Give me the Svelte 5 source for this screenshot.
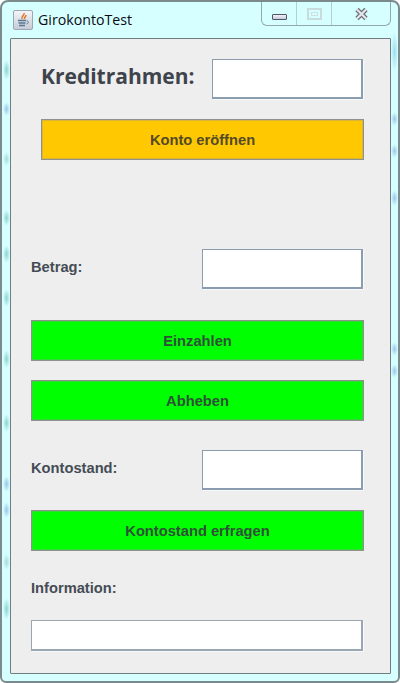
<script>
	let kredit = $state('');
	let betrag = $state('');
	let stand = $state('');
	let info = $state('');
</script>

<div class="window">
	<header class="titlebar">
		<span class="app-icon">
			<svg width="20" height="20" viewBox="0 0 20 20">
				<path d="M11 3c1 2-3 3-2 6M13 5c0 2-2 2-1.500 4" fill="none" stroke="#e2762c" stroke-width="1.500" />
				<path d="M5 10.500h8M5.500 13h7M6 15.500h6" stroke="#5a7590" stroke-width="1.300" />
				<path d="M13.500 11c2.500-.5 2.500 2.500 0 3" fill="none" stroke="#5a7590" stroke-width="1" />
			</svg>
		</span>
		<span class="title">GirokontoTest</span>
		<div class="controls">
			<span class="ctl min"><i></i></span>
			<span class="ctl max"><i></i></span>
			<span class="ctl close">
				<svg width="15" height="14" viewBox="0 0 15 14">
					<path d="M3 2.500l9 9M12 2.500l-9 9" stroke="#6c7178" stroke-width="4.600" />
					<path d="M3 2.500l9 9M12 2.500l-9 9" stroke="#e4e6ea" stroke-width="2.200" />
				</svg>
			</span>
		</div>
	</header>

	<main class="panel">
		<div class="row kredit">
			<label for="kredit">Kreditrahmen:</label>
			<input id="kredit" bind:value={kredit} />
		</div>
		<button class="orange open">Konto eröffnen</button>

		<div class="row betrag">
			<label for="betrag">Betrag:</label>
			<input id="betrag" bind:value={betrag} />
		</div>
		<button class="green einzahlen">Einzahlen</button>
		<button class="green abheben">Abheben</button>

		<div class="row stand">
			<label for="stand">Kontostand:</label>
			<input id="stand" bind:value={stand} />
		</div>
		<button class="green erfragen">Kontostand erfragen</button>

		<label class="info-label" for="info">Information:</label>
		<input class="info" id="info" bind:value={info} />
	</main>
</div>

<style>
	:global(body) {
		margin: 0;
		background: #fff;
	}

	.window {
		box-sizing: border-box;
		width: 400px;
		height: 683px;
		display: flex;
		flex-direction: column;
		padding: 0 7px 7px 8px;
		/* blotches of the desktop showing through the aero glass */
		background:
			radial-gradient(closest-side, #90d2d2, transparent) 1px 58px / 7px 20px no-repeat,
			radial-gradient(closest-side, #98c8ea, transparent) 1px 100px / 7px 14px no-repeat,
			radial-gradient(closest-side, #a4dcdc, transparent) 1px 150px / 7px 14px no-repeat,
			radial-gradient(closest-side, #90d2d2, transparent) 1px 208px / 7px 16px no-repeat,
			radial-gradient(closest-side, #90d2d2, transparent) 1px 243px / 7px 18px no-repeat,
			radial-gradient(closest-side, #90d2d2, transparent) 1px 287px / 7px 18px no-repeat,
			radial-gradient(closest-side, #90d2d2, transparent) 1px 348px / 7px 18px no-repeat,
			radial-gradient(closest-side, #90d2d2, transparent) 1px 412px / 7px 18px no-repeat,
			radial-gradient(closest-side, #98c8ea, transparent) 1px 474px / 7px 16px no-repeat,
			radial-gradient(closest-side, #98c8ea, transparent) 1px 500px / 7px 16px no-repeat,
			radial-gradient(closest-side, #a4dcdc, transparent) 1px 552px / 7px 16px no-repeat,
			radial-gradient(closest-side, #90d2d2, transparent) 1px 596px / 7px 22px no-repeat,
			radial-gradient(closest-side, #9cdcf0, transparent) 389px 30px / 7px 40px no-repeat,
			radial-gradient(closest-side, #98c8ea, transparent) 389px 110px / 7px 14px no-repeat,
			radial-gradient(closest-side, #98c8ea, transparent) 389px 142px / 7px 14px no-repeat,
			radial-gradient(closest-side, #98c8ea, transparent) 389px 188px / 7px 16px no-repeat,
			radial-gradient(closest-side, #98c8ea, transparent) 389px 340px / 7px 14px no-repeat,
			radial-gradient(closest-side, #98c8ea, transparent) 389px 362px / 7px 14px no-repeat,
			#d6ffff;
		border: 2px solid #7b8a8c;
		border-radius: 8px 8px 6px 6px;
		font-family: "Liberation Sans", Arial, sans-serif;
	}

	.titlebar {
		height: 36px;
		flex: none;
		display: flex;
		align-items: flex-start;
		position: relative;
	}

	.app-icon {
		box-sizing: border-box;
		width: 20px;
		height: 20px;
		margin: 8px 0 0 3px;
		display: flex;
		border: 1px solid #9aa7b4;
		border-radius: 2px;
		background: linear-gradient(#f4f5f7, #c6ccd6);
	}

	.app-icon svg {
		margin: -1px;
	}

	.title {
		margin: 9px 0 0 5px;
		font-family: "Open Sans", sans-serif;
		font-size: 14.200px;
		line-height: 18px;
		color: #0b0b14;
	}

	.controls {
		position: absolute;
		top: 0;
		right: 0;
		display: flex;
		height: 24px;
		box-sizing: border-box;
		border: 1px solid #93a8aa;
		border-top: none;
		border-radius: 0 0 6px 6px;
	}

	.ctl {
		display: flex;
		align-items: center;
		justify-content: center;
		box-sizing: border-box;
		height: 100%;
	}

	.min {
		width: 35px;
		border-right: 1px solid #b4cfcf;
	}

	.min i {
		display: block;
		box-sizing: border-box;
		width: 15px;
		height: 6px;
		margin-top: 6px;
		background: linear-gradient(#f1f2f6, #c9cbdb);
		border: 1px solid #50566a;
		border-radius: 1px;
	}

	.max {
		width: 35px;
		border-right: 1px solid #b4cfcf;
	}

	.max i {
		display: block;
		box-sizing: border-box;
		width: 15px;
		height: 12px;
		border: 2px solid #c9dcdc;
		outline: 1px solid #cfe0e0;
		outline-offset: -5px;
	}

	.close {
		width: 58px;
	}

	.panel {
		flex: 1;
		box-sizing: border-box;
		display: flex;
		flex-direction: column;
		align-items: flex-start;
		padding: 0 0 0 20px;
		background: #eeeeee;
		border: 1px solid #6e7d7f;
		border-radius: 1px;
	}

	.row {
		display: flex;
		align-items: center;
		justify-content: space-between;
		width: 332px;
	}

	.row label {
		margin-bottom: 4px;
	}

	label {
		font-weight: bold;
		font-size: 14.700px;
		line-height: 18px;
		color: #454c55;
	}

	input {
		box-sizing: border-box;
		width: 161px;
		height: 40px;
		background: #fff;
		border: solid #8b9cae;
		border-width: 1px 2px 2px 1px;
		border-radius: 0;
		padding: 0 4px;
		outline: none;
		box-shadow: 1px 1px 0 #f8f9fb;
	}

	button {
		box-sizing: border-box;
		width: 333px;
		height: 41px;
		padding: 0;
		border: 1px solid #8e918e;
		outline: 1px solid rgba(150, 150, 150, 0.35);
		outline-offset: -2px;
		border-radius: 0;
		font-family: "Liberation Sans", Arial, sans-serif;
		font-weight: bold;
		font-size: 14.700px;
		color: #3c4a40;
	}

	.green {
		background: #00ff00;
		color: #2f5038;
	}

	.orange {
		background: #ffc800;
		color: #544a28;
	}

	.kredit {
		margin: 20px 0 0 10px;
		width: 322px;
	}

	.kredit label {
		font-family: "Open Sans", sans-serif;
		font-size: 21px;
		line-height: 30px;
		margin-bottom: 6px;
		color: #3f444c;
	}

	.kredit input {
		width: 151px;
	}

	.open {
		margin: 20px 0 0 10px;
		width: 323px;
	}

	.betrag {
		margin-top: 89px;
	}

	.einzahlen {
		margin-top: 31px;
	}

	.abheben {
		margin-top: 19px;
	}

	.stand {
		margin-top: 29px;
	}

	.erfragen {
		margin-top: 20px;
	}

	.info-label {
		margin-top: 28px;
	}

	.info {
		width: 332px;
		height: 31px;
		margin-top: 23px;
		border-color: #9aa6b2;
	}
</style>
